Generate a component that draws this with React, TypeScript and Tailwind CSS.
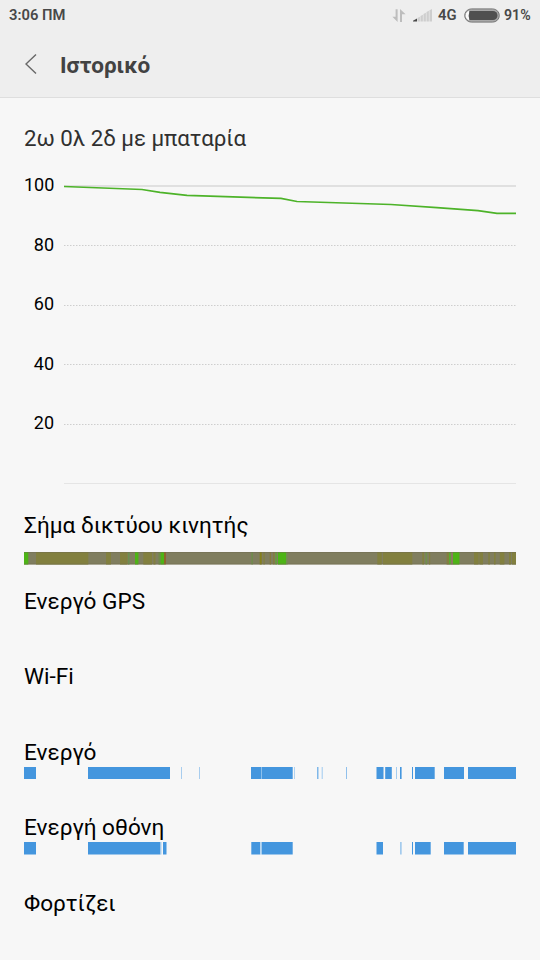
import React from "react";

type Segment = [x: number, width: number, fill: string];

const BLUE = "#4496de";
const GREEN = "#4db416";
const OLIVE = "#82803f";

const signal: Segment[] = [
  [24, 4.3, GREEN], [36, 52.3, OLIVE], [106, 5, OLIVE], [120, 7.5, OLIVE], [128, 1.5, "#6a9050"],
  [135, 3.4, GREEN], [143.3, 8.7, OLIVE], [153.5, 2, OLIVE], [158.5, 2, "#6f8a4a"], [160.6, 3.7, GREEN], [164.3, 1.4, "#98591c"],
  [251.5, 1.2, "#6a9048"], [259.7, 2, "#85801c"], [263.5, 1.2, OLIVE], [269.7, 1.2, "#857c38"], [273.3, 1.2, "#857c38"],
  [275.3, 1.6, "#63a03c"], [278, 8, GREEN], [286.3, 1.2, "#6c944c"],
  [377.3, 4.4, OLIVE], [383, 29.3, OLIVE], [422.3, 1.7, OLIVE], [425.5, 1.6, "#70904c"], [429, 1.2, OLIVE],
  [446.6, 2.4, OLIVE], [449, 1.8, "#5aa830"], [451, 2, "#8d7961"], [453, 6.4, GREEN],
  [474, 4.5, OLIVE], [479.5, 3.5, OLIVE], [488.3, 1.5, OLIVE], [494, 1.6, OLIVE], [499.8, 4.6, OLIVE], [509, 2, OLIVE], [512, 4, OLIVE],
];

const awake: Segment[] = [
  [24, 12, BLUE], [88, 82, BLUE], [181, 1, "#a8cdee"], [199, 1, "#a8cdee"],
  [251, 10, BLUE], [261, 1, "#8cc0ec"], [262, 30.7, BLUE], [294, 1, "#b1d3f1"], [317, 1.5, "#80b8e9"], [321.7, 1, "#a0cbf0"], [346, 1, "#90c0ec"],
  [376.5, 7, BLUE], [385.2, 6.6, BLUE], [396, 1, "#a5cdf0"], [400, 1.6, BLUE], [412, 1, BLUE],
  [415, 19.7, BLUE], [444, 20, BLUE], [468, 48, BLUE],
];

const screen: Segment[] = [
  [24, 12, BLUE], [88, 72.5, BLUE], [160.5, 1, "#a8cdee"], [163, 3.5, BLUE],
  [251.3, 9, BLUE], [260.3, 1.4, "#b9d9f4"], [261.7, 31, BLUE], [376.5, 6.5, BLUE], [400.3, 1.2, "#80b8e9"],
  [412, 1, BLUE], [415, 15.7, BLUE], [444, 19.7, BLUE], [468, 48, BLUE],
];

function Timeline({ segments, base, label }: { segments: Segment[]; base?: string; label: string }) {
  return (
    <svg className="block h-[12.5px] w-[492px]" viewBox="24 0 492 12.5" role="img" aria-label={label}>
      {base && <rect x="24" width="492" height="12.5" fill={base} />}
      {segments.map(([x, width, fill]) => (
        <rect key={x} x={x} width={width} height="12.5" fill={fill} />
      ))}
      {base && <path d="M24 .5H516M24 12H516" stroke="#6f6b50" strokeOpacity=".45" />}
    </svg>
  );
}

function Row({ title, children, spacious }: { title: string; children?: React.ReactNode; spacious?: boolean }) {
  return (
    <section className="h-[75.5px] pl-6">
      <h2 className={`${spacious ? "h-[42px]" : "h-[30px]"} whitespace-nowrap text-[22.6px] leading-8 text-black`}>{title}</h2>
      {children}
    </section>
  );
}

function StatusBar() {
  return (
    <div className="flex h-[30px] items-center pl-[9px] pr-[9px] pt-px text-[14.8px] font-semibold text-[#484848]">
      <span>3:06 ΠΜ</span>
      <svg className="ml-auto h-[15px] w-[14px]" viewBox="0 0 14 15" fill="#bdbdbd">
        <path d="M3.6 1.2H5.6V14L.4 8.8H3.6ZM8 14V1L13.6 6.2H10V14Z" />
      </svg>
      <svg className="ml-[7px] h-[13px] w-[19px]" viewBox="0 0 19 13">
        <path d="M0 12.5V11.8L4 9.6V12.5Z" fill="#484848" />
        <path d="M4.5 12.5V9L6.9 7.8V12.5ZM7.5 12.5V7L9.9 5.8V12.5ZM10.5 12.5V5L12.9 3.8V12.5ZM13.5 12.5V3L15.9 1.8V12.5ZM16.5 12.5V1.2L19 0V12.5Z" fill="#cecece" />
      </svg>
      <span className="ml-[6px] w-[19px]">4G</span>
      <svg className="ml-[7px] h-[15px] w-[36px]" viewBox="0 0 36 15">
        <rect x=".7" y=".9" width="34.6" height="13.2" rx="6.6" fill="#a8a8a8" stroke="#777" strokeWidth="1" />
        <path d="M5.2 2.8Q3.4 3 2.1 5.2Q1.2 7.5 2.1 9.8Q3.4 12 5.2 12.2Z" fill="#fafafa" />
        <path d="M5.5 3H29A4.5 4.5 0 0 1 29 12H5.5Q3.9 7.5 5.5 3Z" fill="#505050" />
      </svg>
      <span className="ml-[4px] w-[27px] whitespace-nowrap text-[14.2px]">91%</span>
    </div>
  );
}

function BatteryChart() {
  return (
    <div className="mt-[19px] flex h-[325px] pl-6">
      <div className="w-[30px] text-right text-[18px] leading-6 text-black">
        {[100, 80, 60, 40, 20].map((value) => (
          <div key={value} className="h-[59.5px]">{value}</div>
        ))}
      </div>
      <svg className="ml-[10px] h-[325px] w-[452px]" viewBox="64 173 452 325">
        <path d="M64 186H516" stroke="#e0e0e0" strokeWidth="2" />
        <path d="M64 245.5H516M64 305.5H516M64 364.5H516M64 424.5H516" stroke="#cecece" strokeDasharray="1.5 1.5" />
        <path d="M64 483.5H516" stroke="#e5e5e5" />
        <path d="M64 186.5L142 189.5L160 192.3L187 195.4L281 198.4L297 201.5L391 204.5L437 207.6L478 210.6L497 213.4H516" fill="none" stroke="#4db329" strokeWidth="1.7" />
      </svg>
    </div>
  );
}

export default function App() {
  return (
    <main className="h-[960px] w-[540px] overflow-hidden bg-[#f7f7f7] font-['Roboto','Noto_Sans',sans-serif]">
      <header className="h-[98px] border-b border-[#dedede] bg-[#eee]">
        <StatusBar />
        <div className="flex h-[67px] items-center pl-[25px]">
          <svg className="h-5 w-3" viewBox="0 0 12 20" fill="none" stroke="#686868" strokeWidth="1.4">
            <path d="M11 .5L1 10L11 19.5" />
          </svg>
          <h1 className="ml-[23px] mt-[3px] text-[22.5px] font-bold leading-8 text-[#424242]">Ιστορικό</h1>
        </div>
      </header>
      <h2 className="mt-[24px] h-8 whitespace-nowrap pl-6 text-[22.3px] leading-8 tracking-[-0.03px] text-[#303030]">2ω 0λ 2δ με μπαταρία</h2>
      <BatteryChart />
      <div className="mt-[12px]">
        <Row title="Σήμα δικτύου κινητής" spacious>
          <Timeline segments={signal} base="#807e5f" label="Σήμα δικτύου κινητής" />
        </Row>
        <Row title="Ενεργό GPS" />
        <Row title="Wi-Fi" />
        <Row title="Ενεργό">
          <Timeline segments={awake} label="Ενεργό" />
        </Row>
        <Row title="Ενεργή οθόνη">
          <Timeline segments={screen} label="Ενεργή οθόνη" />
        </Row>
        <Row title="Φορτίζει" />
      </div>
    </main>
  );
}
